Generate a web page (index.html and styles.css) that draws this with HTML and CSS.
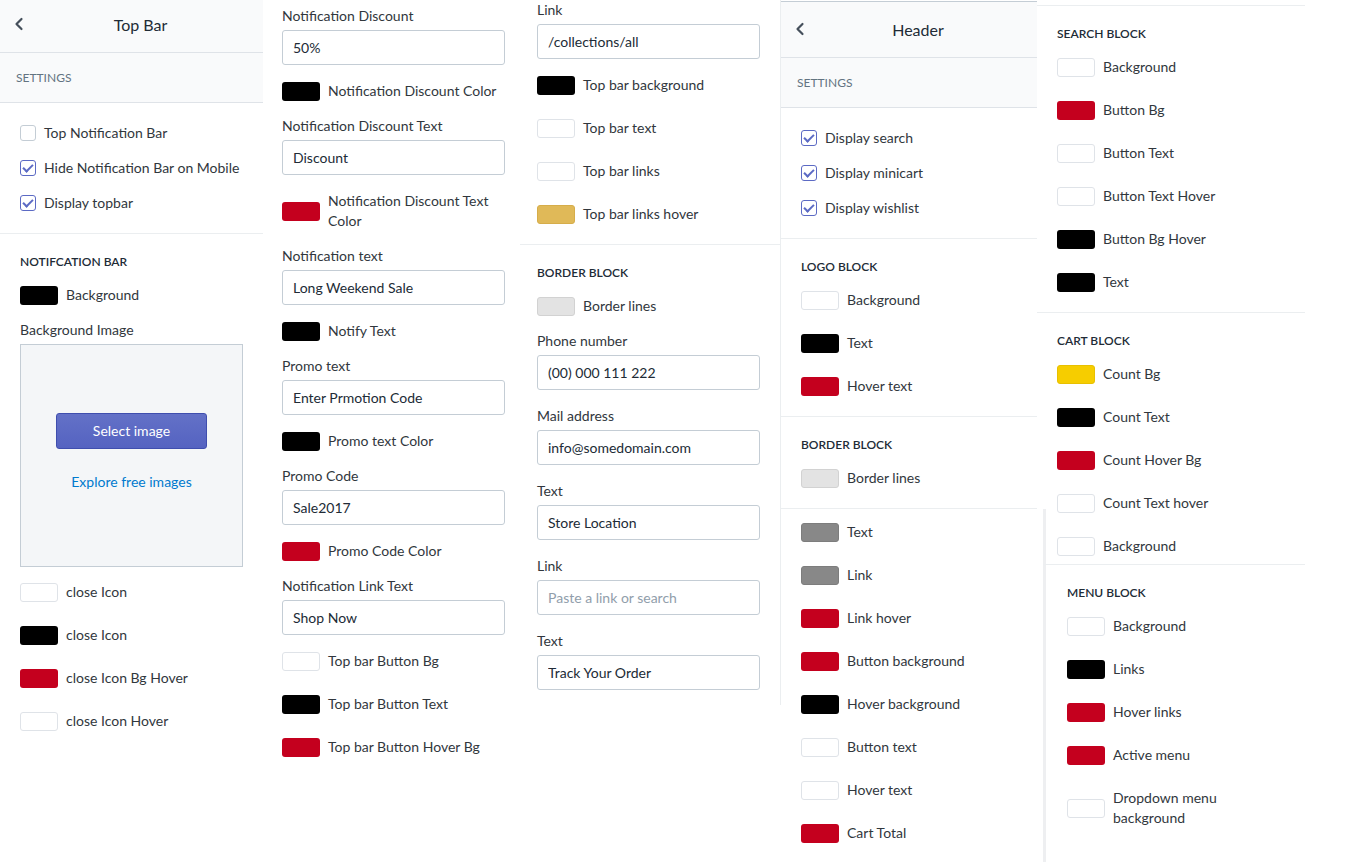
FILE: index.html
```html
<!DOCTYPE html>
<html lang="en">
<head>
    <meta charset="UTF-8">
    <meta name="viewport" content="width=device-width, initial-scale=1.0">
    <title>Theme Settings</title>
    <link rel="stylesheet" href="styles.css">
</head>
<body>
<div class="board">

    <!-- Top Bar panel -->
    <div class="col col-topbar">
        <div class="panel-head">
            <span class="back"><svg width="10" height="14" viewBox="0 0 10 14"><path d="M7.5 2 L2.5 7 L7.5 12" fill="none" stroke="#454f5b" stroke-width="2.2" stroke-linecap="round" stroke-linejoin="round"/></svg></span>
            <h2>Top Bar</h2>
        </div>
        <div class="settings-bar">Settings</div>
        <div class="section">
            <div class="check-row"><span class="box"></span>Top Notification Bar</div>
            <div class="check-row"><span class="box on"></span>Hide Notification Bar on Mobile</div>
            <div class="check-row"><span class="box on"></span>Display topbar</div>
        </div>
        <div class="section bare">
            <h3 class="block-title">Notifcation bar</h3>
            <div class="swatch-row"><span class="swatch c-black"></span><span>Background</span></div>
            <div class="field image-field">
                <label>Background Image</label>
                <div class="image-picker">
                    <button class="btn-primary">Select image</button>
                    <a class="link">Explore free images</a>
                </div>
            </div>
            <div class="swatch-row"><span class="swatch c-white"></span><span>close Icon</span></div>
            <div class="swatch-row"><span class="swatch c-black"></span><span>close Icon</span></div>
            <div class="swatch-row"><span class="swatch c-red"></span><span>close Icon Bg Hover</span></div>
            <div class="swatch-row"><span class="swatch c-white"></span><span>close Icon Hover</span></div>
        </div>
    </div>

    <!-- Notification fields -->
    <div class="col col-notify">
        <div class="field"><label>Notification Discount</label><input class="text-input" type="text" value="50%"></div>
        <div class="swatch-row"><span class="swatch c-black"></span><span>Notification Discount Color</span></div>
        <div class="field"><label>Notification Discount Text</label><input class="text-input" type="text" value="Discount"></div>
        <div class="swatch-row"><span class="swatch c-red"></span><span>Notification Discount Text Color</span></div>
        <div class="field"><label>Notification text</label><input class="text-input" type="text" value="Long Weekend Sale"></div>
        <div class="swatch-row"><span class="swatch c-black"></span><span>Notify Text</span></div>
        <div class="field"><label>Promo text</label><input class="text-input" type="text" value="Enter Prmotion Code"></div>
        <div class="swatch-row"><span class="swatch c-black"></span><span>Promo text Color</span></div>
        <div class="field"><label>Promo Code</label><input class="text-input" type="text" value="Sale2017"></div>
        <div class="swatch-row"><span class="swatch c-red"></span><span>Promo Code Color</span></div>
        <div class="field"><label>Notification Link Text</label><input class="text-input" type="text" value="Shop Now"></div>
        <div class="swatch-row"><span class="swatch c-white"></span><span>Top bar Button Bg</span></div>
        <div class="swatch-row"><span class="swatch c-black"></span><span>Top bar Button Text</span></div>
        <div class="swatch-row"><span class="swatch c-red"></span><span>Top bar Button Hover Bg</span></div>
    </div>

    <!-- Top bar links / border -->
    <div class="col col-links">
        <div class="section flush">
            <div class="field"><label>Link</label><input class="text-input" type="text" value="/collections/all"></div>
            <div class="swatch-row"><span class="swatch c-black"></span><span>Top bar background</span></div>
            <div class="swatch-row"><span class="swatch c-white"></span><span>Top bar text</span></div>
            <div class="swatch-row"><span class="swatch c-white"></span><span>Top bar links</span></div>
            <div class="swatch-row"><span class="swatch c-gold"></span><span>Top bar links hover</span></div>
        </div>
        <div class="section bare short">
            <h3 class="block-title">Border block</h3>
            <div class="swatch-row"><span class="swatch c-line"></span><span>Border lines</span></div>
            <div class="field"><label>Phone number</label><input class="text-input" type="text" value="(00) 000 111 222"></div>
            <div class="field"><label>Mail address</label><input class="text-input" type="text" value="info@somedomain.com"></div>
            <div class="field"><label>Text</label><input class="text-input" type="text" value="Store Location"></div>
            <div class="field"><label>Link</label><input class="text-input" type="text" placeholder="Paste a link or search"></div>
            <div class="field"><label>Text</label><input class="text-input" type="text" value="Track Your Order"></div>
        </div>
    </div>

    <!-- Header panel -->
    <div class="col col-header">
        <div class="panel-head tall">
            <span class="back"><svg width="10" height="14" viewBox="0 0 10 14"><path d="M7.5 2 L2.5 7 L7.5 12" fill="none" stroke="#454f5b" stroke-width="2.2" stroke-linecap="round" stroke-linejoin="round"/></svg></span>
            <h2>Header</h2>
        </div>
        <div class="settings-bar">Settings</div>
        <div class="section">
            <div class="check-row"><span class="box on"></span>Display search</div>
            <div class="check-row"><span class="box on"></span>Display minicart</div>
            <div class="check-row"><span class="box on"></span>Display wishlist</div>
        </div>
        <div class="section">
            <h3 class="block-title">Logo block</h3>
            <div class="swatch-row"><span class="swatch c-white"></span><span>Background</span></div>
            <div class="swatch-row"><span class="swatch c-black"></span><span>Text</span></div>
            <div class="swatch-row"><span class="swatch c-red"></span><span>Hover text</span></div>
        </div>
        <div class="section">
            <h3 class="block-title">Border block</h3>
            <div class="swatch-row"><span class="swatch c-line"></span><span>Border lines</span></div>
        </div>
        <div class="section tail">
            <div class="swatch-row"><span class="swatch c-grey"></span><span>Text</span></div>
            <div class="swatch-row"><span class="swatch c-grey"></span><span>Link</span></div>
            <div class="swatch-row"><span class="swatch c-red"></span><span>Link hover</span></div>
            <div class="swatch-row"><span class="swatch c-red"></span><span>Button background</span></div>
            <div class="swatch-row"><span class="swatch c-black"></span><span>Hover background</span></div>
            <div class="swatch-row"><span class="swatch c-white"></span><span>Button text</span></div>
            <div class="swatch-row"><span class="swatch c-white"></span><span>Hover text</span></div>
            <div class="swatch-row"><span class="swatch c-red"></span><span>Cart Total</span></div>
        </div>
    </div>

    <!-- Search / cart / menu blocks -->
    <div class="col col-blocks">
        <div class="section">
            <h3 class="block-title">Search block</h3>
            <div class="swatch-row"><span class="swatch c-white"></span><span>Background</span></div>
            <div class="swatch-row"><span class="swatch c-red"></span><span>Button Bg</span></div>
            <div class="swatch-row"><span class="swatch c-white"></span><span>Button Text</span></div>
            <div class="swatch-row"><span class="swatch c-white"></span><span>Button Text Hover</span></div>
            <div class="swatch-row"><span class="swatch c-black"></span><span>Button Bg Hover</span></div>
            <div class="swatch-row"><span class="swatch c-black"></span><span>Text</span></div>
        </div>
        <div class="section bare cart">
            <h3 class="block-title">Cart block</h3>
            <div class="swatch-row"><span class="swatch c-yellow"></span><span>Count Bg</span></div>
            <div class="swatch-row"><span class="swatch c-black"></span><span>Count Text</span></div>
            <div class="swatch-row"><span class="swatch c-red"></span><span>Count Hover Bg</span></div>
            <div class="swatch-row"><span class="swatch c-white"></span><span>Count Text hover</span></div>
            <div class="swatch-row"><span class="swatch c-white"></span><span>Background</span></div>
        </div>
        <div class="section menu">
            <h3 class="block-title">Menu block</h3>
            <div class="swatch-row"><span class="swatch c-white"></span><span>Background</span></div>
            <div class="swatch-row"><span class="swatch c-black"></span><span>Links</span></div>
            <div class="swatch-row"><span class="swatch c-red"></span><span>Hover links</span></div>
            <div class="swatch-row"><span class="swatch c-red"></span><span>Active menu</span></div>
            <div class="swatch-row narrow"><span class="swatch c-white"></span><span>Dropdown menu background</span></div>
        </div>
    </div>

</div>
</body>
</html>
```

FILE: styles.css
```css
body { margin: 0; background: #fff; color: #31373d; font-family: Lato, "Liberation Sans", sans-serif; font-size: 14px; line-height: 20px; }
.board { display: flex; align-items: flex-start; width: 1349px; height: 862px; overflow: hidden; }

.col { flex: none; box-sizing: border-box; }
.col-topbar { width: 263px; }
.col-notify { width: 257px; padding: 6px 15px 0 19px; }
.col-links { width: 261px; border-right: 1px solid #ebeef0; }
.col-header { width: 256px; margin-top: 1px; border-top: 1px solid #c4cdd5; }
.col-blocks { width: 268px; margin-top: 5px; border-top: 1px solid #ebeef0; }

/* panel header */
.panel-head { height: 53px; box-sizing: border-box; padding: 0 0 3px 18px; display: flex; align-items: center; justify-content: center; position: relative; background: #f9fafb; border-bottom: 1px solid #dfe3e8; }
.panel-head.tall { height: 56px; padding-bottom: 0; }
.panel-head h2 { margin: 0; font-size: 16px; font-weight: 400; color: #212b36; }
.back { position: absolute; left: 14px; top: 50%; margin-top: -8px; display: flex; }
.panel-head:not(.tall) .back { margin-top: -9px; }
.settings-bar { height: 49px; display: flex; align-items: center; padding-left: 16px; background: #f9fafb; border-bottom: 1px solid #dfe3e8; font-size: 12px; text-transform: uppercase; color: #637381; }

/* sections */
.section { padding: 20px 20px 20px; border-bottom: 1px solid #ebeef0; }
.section.bare { padding-top: 18px; border-bottom: none; }
.section.flush { padding: 0 21px 20px 17px; }
.section.short { padding: 18px 21px 15px 17px; }
.section > :last-child { margin-bottom: 0; }
.col-header .section + .section,
.col-blocks .section { padding-top: 18px; }
.col-header .section.tail { padding: 13px 20px 40px; margin-right: -9px; border-right: 3px solid #eeeff1; border-bottom: none; }
.col-blocks .section.cart { padding-bottom: 8px; }
.col-blocks .section.menu { margin-left: 6px; padding: 18px 20px 40px 21px; border-left: 3px solid #eeeff1; border-top: 1px solid #ebeef0; border-bottom: none; }

.block-title { margin: 0 0 13px; font-size: 12px; font-weight: 600; line-height: 20px; text-transform: uppercase; color: #212b36; }

/* checkboxes */
.check-row { display: flex; align-items: center; height: 20px; color: #31373d; }
.check-row + .check-row { margin-top: 15px; }
.box { width: 16px; height: 16px; box-sizing: border-box; margin-right: 8px; border: 1px solid #c4cdd5; border-radius: 3px; background: #fff; position: relative; }
.box.on { border-color: #5c6ac4; }
.box.on::after { content: ""; position: absolute; left: 4px; top: 1px; width: 4px; height: 8px; border: solid #5c6ac4; border-width: 0 2px 2px 0; transform: rotate(45deg); }

/* colour swatches */
.swatch-row { display: flex; align-items: center; min-height: 20px; margin-bottom: 15px; }
.swatch-row + .swatch-row { margin-top: 23px; }
.swatch-row.narrow span:last-child { max-width: 140px; }
.swatch { flex: none; width: 38px; height: 19px; box-sizing: border-box; margin-right: 8px; border-radius: 3px; border: 1px solid transparent; }
.c-black { background: #000; }
.c-red { background: #c4001e; }
.c-white { background: #fff; border-color: #dfe3e8; }
.c-gold { background: #e0b958; border-color: #d6ad4a; }
.c-grey { background: #888; border-color: #7d7d7d; }
.c-line { background: #e3e3e3; border-color: #d2d2d2; }
.c-yellow { background: #f6cd00; border-color: #e8c000; }

/* text fields */
.field { margin-bottom: 16px; }
.field label { display: block; margin-bottom: 4px; color: #31373d; }
.text-input { display: block; width: 223px; height: 35px; box-sizing: border-box; padding: 0 10px; border: 1px solid #c4cdd5; border-radius: 3px; font: inherit; color: #212b36; background: #fff; }
.text-input::placeholder { color: #919eab; }

/* image picker */
.field.image-field { margin-bottom: 15px; }
.image-picker { width: 223px; height: 223px; box-sizing: border-box; border: 1px solid #c4cdd5; background: #f4f6f8; display: flex; flex-direction: column; align-items: center; justify-content: center; gap: 23px; padding-bottom: 6px; }
.btn-primary { width: 151px; height: 36px; border: 1px solid #3f4eae; border-radius: 3px; background: linear-gradient(#6371c7, #5563c1); color: #fff; font: inherit; font-size: 14px; }
.link { color: #007ace; }
```
